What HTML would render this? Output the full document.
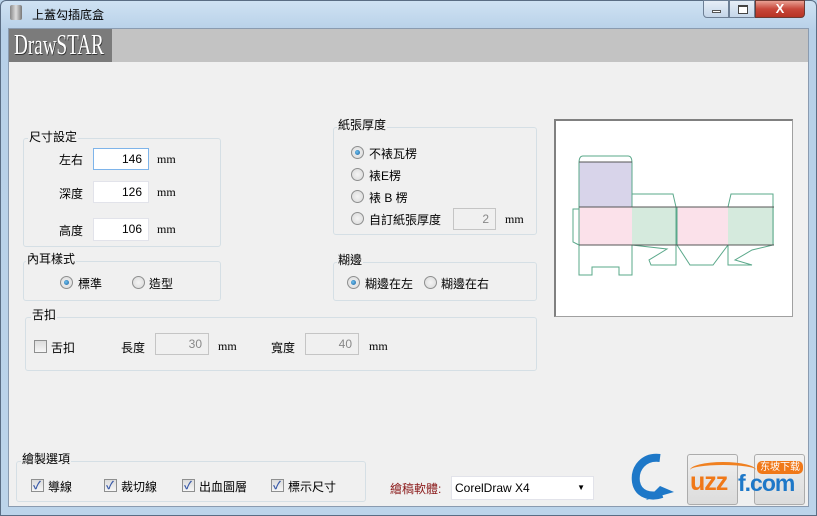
<!DOCTYPE html>
<html><head><meta charset="utf-8"><style>
*{box-sizing:border-box;margin:0;padding:0}
body{width:817px;height:516px;overflow:hidden;background:#b9d3ea;font-family:"Liberation Sans","Noto Sans CJK TC",sans-serif;font-size:12px;color:#000;position:relative}
.a{position:absolute}
.frame{left:0;top:0;width:817px;height:516px;background:linear-gradient(#cfe2f3,#b7d0e8 30px,#bcd4ea);border:1px solid #5a6d84;border-radius:6px 6px 0 0}
.client{left:8px;top:28px;width:801px;height:479px;background:#f0f0f0;border:1px solid #8a9bb0}
.grp{position:absolute;border:1px solid #d5dfe5;border-radius:3px}
.lbl{position:absolute;background:#f0f0f0;padding:0 1px;line-height:14px}
.inp{position:absolute;background:#fff;border:1px solid #abadb3;text-align:right;padding-right:6px;font-size:12px;line-height:20px}
.dis{background:#f0f0f0;color:#888;border-color:#c5c5c5}
.rad{position:absolute;width:13px;height:13px;border-radius:50%;border:1px solid #8e8f8f;background:radial-gradient(#f4f4f4,#d8d8d8)}
.rad.on::after{content:"";position:absolute;left:3px;top:3px;width:5px;height:5px;border-radius:50%;background:radial-gradient(circle at 40% 40%,#6cc0f0,#1a5f9c)}
.chk{position:absolute;width:13px;height:13px;border:1px solid #8e8f8f;background:linear-gradient(#dcdcdc,#f6f6f6)}
.chk.on::after{content:"✓";position:absolute;left:1px;top:-3px;font-size:11px;color:#3a5aa8;font-weight:bold}
.mm{position:absolute;font-family:"Liberation Serif",serif;font-size:12px}
.btn{position:absolute;border:1px solid #acacac;border-radius:3px;background:linear-gradient(#f2f2f2,#e5e5e5 50%,#dcdcdc)}
</style></head><body>
<div class="a frame"></div>
<div class="a" style="left:10px;top:5px;width:12px;height:15px;background:linear-gradient(90deg,#888,#ddd,#777);border-radius:2px"></div>
<div class="a" style="left:32px;top:6px;font-size:12px">上蓋勾插底盒</div>
<div class="a" style="left:703px;top:0;width:26px;height:18px;border:1px solid #6d7f95;border-radius:0 0 0 4px;background:linear-gradient(#e6eef7,#c5d6e9)"><div class="a" style="left:8px;top:9px;width:9px;height:3px;border:1px solid #555;background:#fff"></div></div>
<div class="a" style="left:729px;top:0;width:26px;height:18px;border:1px solid #6d7f95;background:linear-gradient(#e6eef7,#c5d6e9)"><div class="a" style="left:8px;top:4px;width:10px;height:9px;border:1px solid #444;border-top-width:2px;background:#fff"></div></div>
<div class="a" style="left:755px;top:0;width:50px;height:18px;border:1px solid #6d3a33;border-radius:0 0 4px 0;background:linear-gradient(#e9a093,#c8473a 50%,#b63424);color:#fff;font-weight:bold;text-align:center;line-height:16px;font-size:13px">X</div>
<div class="a client"></div>
<div class="a" style="left:9px;top:29px;width:799px;height:33px;background:#c3c3c3"></div>
<div class="a" style="left:9px;top:29px;width:103px;height:33px;background:#7b7b7b;overflow:hidden"><div class="a" style="left:5px;top:0;color:#fff;font-family:'Liberation Serif',serif;font-size:29px;line-height:33px;text-shadow:1px 1px 0 #333;white-space:nowrap;transform:scaleX(0.66);transform-origin:0 0">DrawSTAR</div></div>

<div class="grp" style="left:23px;top:138px;width:198px;height:109px"></div>
<div class="lbl" style="left:28px;top:130px">尺寸設定</div>
<div class="a" style="left:59px;top:151px">左右</div>
<div class="inp" style="left:93px;top:148px;width:56px;height:22px;border-color:#7eb4ea">146</div>
<div class="mm" style="left:157px;top:152px">mm</div>
<div class="a" style="left:59px;top:185px">深度</div>
<div class="inp" style="left:93px;top:181px;width:56px;height:22px;border-color:#e2e3ea">126</div>
<div class="mm" style="left:157px;top:185px">mm</div>
<div class="a" style="left:59px;top:222px">高度</div>
<div class="inp" style="left:93px;top:218px;width:56px;height:23px;border-color:#e2e3ea">106</div>
<div class="mm" style="left:157px;top:222px">mm</div>

<div class="grp" style="left:23px;top:261px;width:198px;height:40px"></div>
<div class="lbl" style="left:26px;top:252px">內耳樣式</div>
<div class="rad on" style="left:60px;top:276px"></div><div class="a" style="left:78px;top:275px">標準</div>
<div class="rad" style="left:132px;top:276px"></div><div class="a" style="left:149px;top:275px">造型</div>

<div class="grp" style="left:333px;top:127px;width:204px;height:108px"></div>
<div class="lbl" style="left:337px;top:118px">紙張厚度</div>
<div class="rad on" style="left:351px;top:146px"></div><div class="a" style="left:369px;top:145px">不裱瓦楞</div>
<div class="rad" style="left:351px;top:168px"></div><div class="a" style="left:369px;top:167px">裱E楞</div>
<div class="rad" style="left:351px;top:190px"></div><div class="a" style="left:369px;top:189px">裱 B 楞</div>
<div class="rad" style="left:351px;top:212px"></div><div class="a" style="left:369px;top:211px">自訂紙張厚度</div>
<div class="inp dis" style="left:453px;top:208px;width:43px;height:22px">2</div>
<div class="mm" style="left:505px;top:212px">mm</div>

<div class="grp" style="left:333px;top:262px;width:204px;height:39px"></div>
<div class="lbl" style="left:337px;top:253px">糊邊</div>
<div class="rad on" style="left:347px;top:276px"></div><div class="a" style="left:365px;top:275px">糊邊在左</div>
<div class="rad" style="left:424px;top:276px"></div><div class="a" style="left:441px;top:275px">糊邊在右</div>

<div class="grp" style="left:25px;top:317px;width:512px;height:54px"></div>
<div class="lbl" style="left:31px;top:308px">舌扣</div>
<div class="chk" style="left:34px;top:340px"></div><div class="a" style="left:51px;top:339px">舌扣</div>
<div class="a" style="left:121px;top:339px">長度</div>
<div class="inp dis" style="left:155px;top:333px;width:54px;height:22px">30</div>
<div class="mm" style="left:218px;top:339px">mm</div>
<div class="a" style="left:271px;top:339px">寬度</div>
<div class="inp dis" style="left:305px;top:333px;width:54px;height:22px">40</div>
<div class="mm" style="left:369px;top:339px">mm</div>

<div class="a" style="left:554px;top:119px;width:239px;height:198px;background:#fff;border:1px solid #a0a0a0;border-left:2px solid #808080;border-top:2px solid #808080"></div>
<svg class="a" style="left:554px;top:119px" width="239" height="198" viewBox="554 119 239 198">
<g fill="none" stroke="#5aa88a" stroke-width="1">
<rect x="579" y="162" width="53" height="45" fill="#d8d4ea" stroke="none"/>
<rect x="579" y="207" width="53" height="38" fill="#fbe1ea" stroke="none"/>
<rect x="632" y="207" width="45" height="38" fill="#d5eadd" stroke="none"/>
<rect x="677" y="207" width="51" height="38" fill="#fbe1ea" stroke="none"/>
<rect x="728" y="207" width="46" height="38" fill="#d5eadd" stroke="none"/>
<path d="M579,163 Q579,156 583,156 L628,156 Q632,156 632,163 L632,207"/>
<path d="M579,163 L579,275 L592,275 L592,267 L619,267 L619,275 L632,275 L632,245"/>
<path d="M632,194 L673,194 L676,207 L676,265 L651,265 L649,260 L667,249 L632,245"/>
<path d="M677,245 L690,265 L713,265 L728,245"/>
<path d="M728,207 L731,194 L773,194 L773,245 L752,250 L735,260 L752,265 L728,265 L728,245"/>
<path d="M579,209 L573,209 L573,242 L579,245"/>
<line x1="677" y1="207" x2="677" y2="245"/>
</g>
<g stroke="#555" stroke-width="1">
<line x1="579" y1="162" x2="632" y2="162"/>
<line x1="579" y1="207" x2="774" y2="207"/>
<line x1="579" y1="245" x2="774" y2="245"/>
</g>
</svg>

<div class="grp" style="left:16px;top:461px;width:350px;height:41px"></div>
<div class="lbl" style="left:21px;top:452px">繪製選項</div>
<div class="chk on" style="left:31px;top:479px"></div><div class="a" style="left:48px;top:478px">導線</div>
<div class="chk on" style="left:104px;top:479px"></div><div class="a" style="left:121px;top:478px">裁切線</div>
<div class="chk on" style="left:182px;top:479px"></div><div class="a" style="left:199px;top:478px">出血圖層</div>
<div class="chk on" style="left:271px;top:479px"></div><div class="a" style="left:288px;top:478px">標示尺寸</div>
<div class="a" style="left:390px;top:480px;color:#8b1a1a">繪稿軟體:</div>
<div class="a" style="left:451px;top:476px;width:143px;height:24px;background:#fff;border:1px solid #e2e3ea;line-height:22px;padding-left:3px">CorelDraw X4<span class="a" style="right:8px;top:0;font-size:8px">▼</span></div>

<div class="btn" style="left:687px;top:454px;width:51px;height:51px"></div>
<div class="btn" style="left:754px;top:454px;width:51px;height:51px"></div>
<svg class="a" style="left:630px;top:452px" width="60" height="52">
<path d="M30,6 C14,4 4,16 6,30 C8,42 20,46 32,42" fill="none" stroke="#1e78c8" stroke-width="8"/>
<path d="M16,48 L44,40 L30,34 Z" fill="#1e78c8"/>
</svg>
<div class="a" style="left:690px;top:462px;width:66px;height:16px;border-top:3px solid #f08020;border-radius:50% 50% 0 0"></div>
<div class="a" style="left:690px;top:468px;color:#f07818;font-weight:bold;font-size:25px;letter-spacing:-1px;line-height:28px">uzz</div>
<div class="a" style="left:738px;top:470px;color:#1e78c8;font-weight:bold;font-size:23px;line-height:26px;letter-spacing:-1px">f.com</div>
<div class="a" style="left:757px;top:461px;background:#f07818;color:#fff;font-size:10px;border-radius:5px;padding:0 3px;line-height:13px">东坡下载</div>
</body></html>
